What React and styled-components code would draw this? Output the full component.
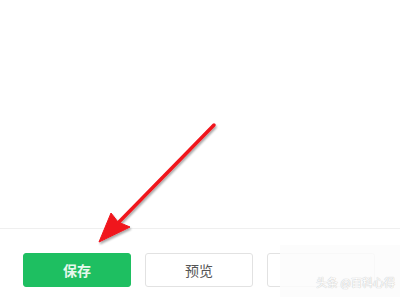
import React from 'react'
import styled, {createGlobalStyle} from 'styled-components'

const GlobalStyle = createGlobalStyle`
  html, body {
    margin: 0;
    padding: 0;
    background: #fff;
    font-family: "Noto Sans CJK SC", "Liberation Sans", sans-serif;
  }
`

const App = () => {
  return (
    <Page>
      <GlobalStyle/>
      <Content/>
      <Footer>
        <Button $primary>保存</Button>
        <Button>预览</Button>
        <Button/>
      </Footer>
      <Arrow viewBox="0 0 400 300" width="400" height="300">
        <defs>
          <filter id="shadow" x="-20%" y="-20%" width="140%" height="140%">
            <feGaussianBlur in="SourceAlpha" stdDeviation="1.2"/>
            <feOffset dx="1" dy="1.5" result="blur"/>
            <feComponentTransfer><feFuncA type="linear" slope="0.35"/></feComponentTransfer>
            <feMerge><feMergeNode/><feMergeNode in="SourceGraphic"/></feMerge>
          </filter>
        </defs>
        <g filter="url(#shadow)" fill="#f0141c" stroke="#f0141c">
          <line x1="214" y1="125" x2="118" y2="223" strokeWidth="3.5" strokeLinecap="round"/>
          <polygon points="99,242 111,213 118,222 130,227" strokeWidth="1" strokeLinejoin="round"/>
        </g>
      </Arrow>
      <Watermark>头条 @百科心得</Watermark>
    </Page>
  )
}

export default App

const Page = styled.div`
  position: relative;
  width: 400px;
  height: 300px;
  overflow: hidden;
  background: #fff;
`

const Content = styled.div`
  height: 228px;
  border-bottom: 1px solid #efefef;
`

const Footer = styled.div`
  display: flex;
  gap: 14px;
  padding: 24px 0 0 23px;
`

const Button = styled.div`
  flex: none;
  box-sizing: border-box;
  width: 108px;
  height: 34px;
  border-radius: 3px;
  display: flex;
  align-items: center;
  justify-content: center;
  font-size: 14px;
  font-weight: ${p => p.$primary ? 700 : 400};
  color: ${p => p.$primary ? '#e8f8ee' : '#555'};
  background: ${p => p.$primary ? '#1ebf61' : '#fff'};
  border: 1px solid ${p => p.$primary ? '#1ebf61' : '#e2e2e2'};
`

const Arrow = styled.svg`
  position: absolute;
  left: 0;
  top: 0;
  pointer-events: none;
`

const Watermark = styled.div`
  position: absolute;
  left: 280px;
  top: 245px;
  width: 120px;
  height: 52px;
  box-sizing: border-box;
  background: rgba(252, 252, 252, 0.85);
  display: flex;
  align-items: flex-end;
  justify-content: flex-end;
  padding: 0 5px 7px 0;
  font-size: 11px;
  color: #fff;
  text-shadow: 0 0 1px #c4c4c4, 0 0 1px #c4c4c4;
`
